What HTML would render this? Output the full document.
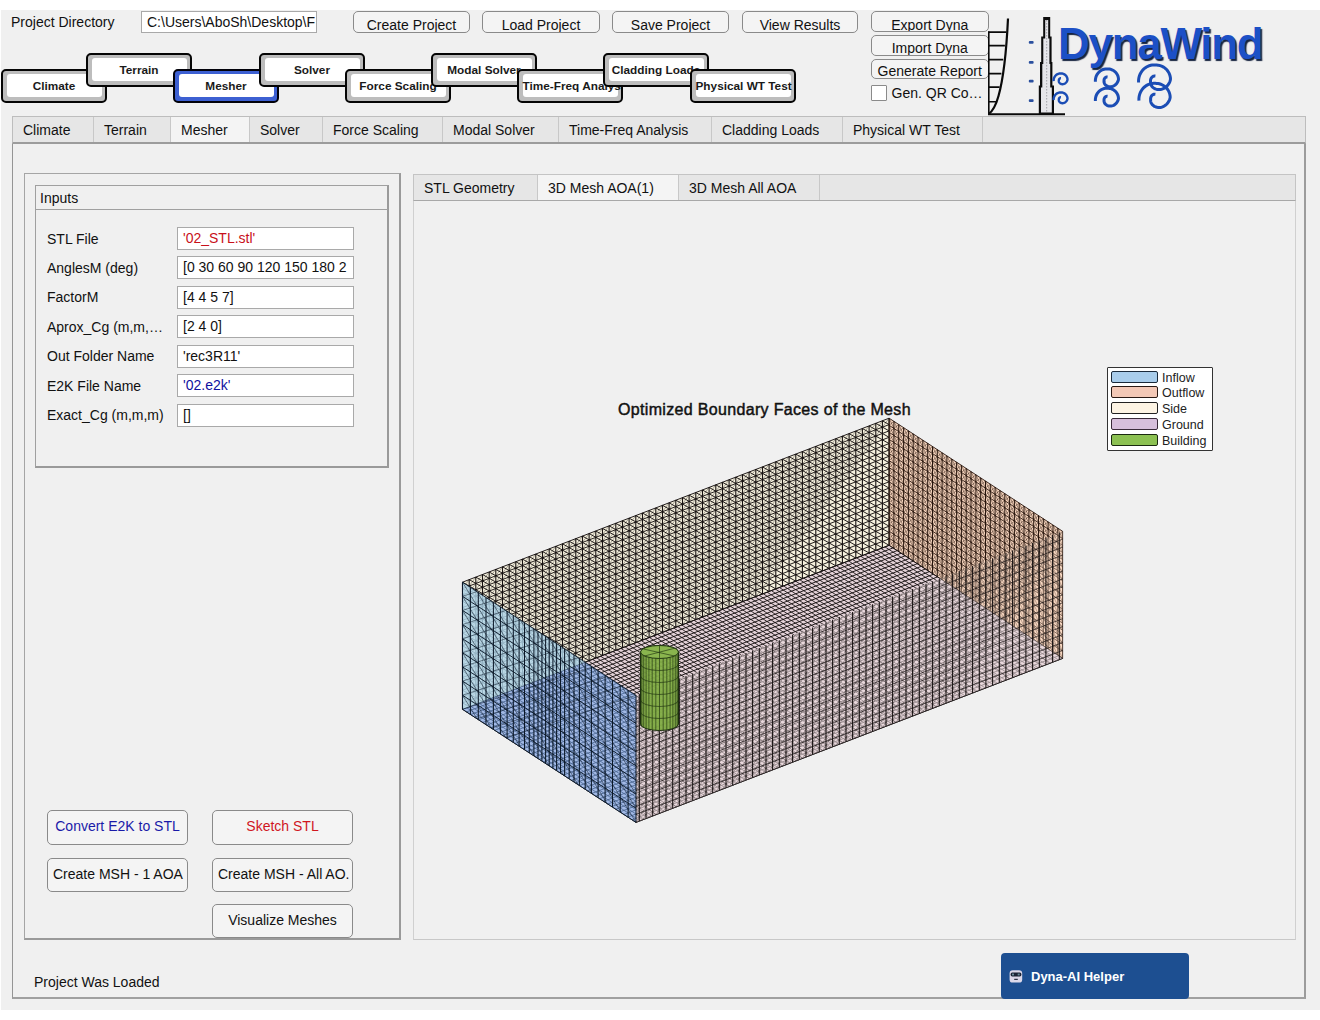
<!DOCTYPE html>
<html><head><meta charset="utf-8">
<style>
*{box-sizing:border-box;margin:0;padding:0}
html,body{width:1320px;height:1020px;overflow:hidden;background:#fff;font-family:"Liberation Sans",sans-serif;color:#111}
.a{position:absolute}
#app{position:absolute;left:1px;top:10px;width:1319px;height:1000px;background:#f0f0f0}
.t{position:absolute;white-space:nowrap;line-height:1}
.btn{position:absolute;border:1px solid #8a8a8a;border-radius:5px;background:#f4f4f4;font-size:14px;text-align:center;white-space:nowrap;overflow:hidden}
.pill{position:absolute;width:106px;height:33.5px;border:2.5px solid #050505;border-radius:5px;background:#bdbdbd;overflow:hidden}
.pill>div{position:absolute;left:3.5px;top:3px;right:3.5px;bottom:3.5px;background:#fff;border-radius:3px;font-weight:bold;font-size:11.8px;text-align:center;line-height:25px;white-space:nowrap;overflow:visible;color:#1a1a1a}
.pill.sel{border-color:#02020a;background:#3d60d2}
.ed{position:absolute;background:#fff;border:1px solid #a9a9a9;font-size:14px;white-space:nowrap;overflow:hidden;padding-left:5px;line-height:20px}
.tab{position:absolute;top:0;height:100%;border-right:1px solid #c8c8c8;font-size:14px;padding-left:10px;line-height:26px;white-space:nowrap}
.lbl{position:absolute;left:47px;font-size:14px;white-space:nowrap;line-height:1}
</style></head><body>
<div id="app"></div>

<!-- top row -->
<div class="t" style="left:11px;top:14.6px;font-size:14px">Project Directory</div>
<div class="ed" style="left:141px;top:11px;width:176px;height:22px;">C:\Users\AboSh\Desktop\F</div>

<div class="btn" style="left:353px;top:11px;width:117px;height:22px;line-height:14px;padding-top:5.5px">Create Project</div>
<div class="btn" style="left:482px;top:11px;width:118px;height:22px;line-height:14px;padding-top:5.5px">Load Project</div>
<div class="btn" style="left:612px;top:11px;width:117px;height:22px;line-height:14px;padding-top:5.5px">Save Project</div>
<div class="btn" style="left:742px;top:11px;width:116px;height:22px;line-height:14px;padding-top:5.5px">View Results</div>

<div class="btn" style="left:871px;top:11.4px;width:117.5px;height:21px;line-height:14px;padding-top:5.5px">Export Dyna</div>
<div class="btn" style="left:871px;top:35px;width:117.5px;height:21.3px;line-height:14px;padding-top:4.7px">Import Dyna</div>
<div class="btn" style="left:871px;top:58.7px;width:117.5px;height:20.7px;line-height:14px;padding-top:4.6px">Generate Report</div>
<div class="a" style="left:871.4px;top:85.3px;width:15.5px;height:15.8px;background:#fff;border:1px solid #8a8a8a;border-radius:1px"></div>
<div class="t" style="left:891.5px;top:85.5px;font-size:14px">Gen. QR Co…</div>

<!-- pills -->
<div class="pill" style="left:1px;top:69px"><div>Climate</div></div>
<div class="pill" style="left:86px;top:53px"><div>Terrain</div></div>
<div class="pill sel" style="left:173px;top:69px"><div>Mesher</div></div>
<div class="pill" style="left:259px;top:53px"><div>Solver</div></div>
<div class="pill" style="left:345px;top:69px"><div>Force Scaling</div></div>
<div class="pill" style="left:431px;top:53px"><div>Modal Solver</div></div>
<div class="pill" style="left:517px;top:69px"><div>Time-Freq Analysis</div></div>
<div class="pill" style="left:603px;top:53px"><div>Cladding Loads</div></div>
<div class="pill" style="left:690px;top:69px"><div>Physical WT Test</div></div>

<!-- LOGO -->
<svg class="a" style="left:0;top:0" width="1320" height="130" viewBox="0 0 1320 130">
<path d="M1008 18.5 C1006.5 50 1003 80 998.5 96 C996 105 993 111 988.5 114.2" stroke="#0a0a0a" stroke-width="2.2" fill="none"/>
<path d="M988 32.1L1006.4 32.1M988 45.6L1004.9 45.6M988 59.6L1003.2 59.6M988 73.6L1001.4 73.6M988 87.1L999.6 87.1M988 101.7L996.1 101.7" stroke="#0a0a0a" stroke-width="1.6" fill="none"/>
<path d="M988.8 31.5V114.5" stroke="#0a0a0a" stroke-width="1.6" fill="none"/>
<path d="M988 114.3H1065" stroke="#0a0a0a" stroke-width="2" fill="none"/>
<path d="M1043.2 17H1050.2V36.5H1051.6V62H1052.4V85.5H1054V114H1038.8V85.5H1040V62H1041.2V36.5H1043.2Z" fill="#0c0c0c"/>
<path d="M1045.2 20H1048.2V38.5H1049.4V64H1050.2V87.5H1051.8V112.5H1041V87.5H1042.3V64H1043.3V38.5H1045.2Z" fill="#e6e6ea"/>
<path d="M1046.7 20V112" stroke="#9a9aa0" stroke-width="0.9" stroke-dasharray="1.5 1.5" fill="none"/>
<rect x="1028.8" y="41.0" width="4.8" height="2.8" rx="1" fill="#2a4f9e"/>
<rect x="1028.8" y="60.9" width="4.8" height="2.8" rx="1" fill="#2a4f9e"/>
<rect x="1028.8" y="79.8" width="4.8" height="2.8" rx="1" fill="#2a4f9e"/>
<rect x="1028.8" y="99.2" width="4.8" height="2.8" rx="1" fill="#2a4f9e"/>
<path d="M1053.63 81.13 L1053.61 80.37 L1053.67 79.62 L1053.81 78.88 L1054.01 78.17 L1054.28 77.49 L1054.62 76.85 L1055.01 76.25 L1055.46 75.70 L1055.96 75.20 L1056.49 74.76 L1057.06 74.38 L1057.66 74.06 L1058.29 73.81 L1058.92 73.63 L1059.57 73.51 L1060.21 73.45 L1060.85 73.47 L1061.48 73.51 L1062.10 73.56 L1062.72 73.69 L1063.32 73.87 L1063.89 74.11 L1064.45 74.40 L1064.97 74.75 L1065.45 75.15 L1065.89 75.59 L1066.28 76.08 L1066.63 76.60 L1066.92 77.16 L1067.15 77.74 L1067.33 78.34 L1067.44 78.95 L1067.50 79.58 L1067.40 80.20 L1067.20 80.79 L1066.94 81.35 L1066.64 81.86 L1066.29 82.33 L1065.90 82.75 L1065.48 83.12 L1065.03 83.44 L1064.56 83.70 L1064.08 83.90 L1063.59 84.05 L1063.11 84.15 L1062.62 84.19 L1062.15 84.18 L1061.70 84.11 L1061.27 84.01 L1060.86 83.86 L1060.48 83.67 L1060.14 83.45 L1059.83 83.20 L1059.57 82.93 L1059.34 82.64 L1059.15 82.33 L1059.00 82.02 L1058.90 81.70 L1058.83 81.39 L1058.81 81.08 L1058.82 80.79 L1058.82 80.52 L1058.82 80.27 L1058.84 80.03 L1058.88 79.79 L1058.95 79.57 L1059.04 79.36 L1059.15 79.16 L1059.28 78.98 L1059.42 78.82 L1059.57 78.69 L1059.74 78.57 L1059.91 78.47 L1060.08 78.39 L1060.26 78.34 L1060.43 78.30 L1060.61 78.29 L1060.78 78.29 L1060.94 78.31" stroke="#1b4db5" stroke-width="2.4" fill="none" stroke-linecap="butt"/>
<path d="M1053.63 100.13 L1053.61 99.37 L1053.67 98.62 L1053.81 97.88 L1054.01 97.17 L1054.28 96.49 L1054.62 95.85 L1055.01 95.25 L1055.46 94.70 L1055.96 94.20 L1056.49 93.76 L1057.06 93.38 L1057.66 93.06 L1058.29 92.81 L1058.92 92.63 L1059.57 92.51 L1060.21 92.45 L1060.85 92.47 L1061.48 92.51 L1062.10 92.56 L1062.72 92.69 L1063.32 92.87 L1063.89 93.11 L1064.45 93.40 L1064.97 93.75 L1065.45 94.15 L1065.89 94.59 L1066.28 95.08 L1066.63 95.60 L1066.92 96.16 L1067.15 96.74 L1067.33 97.34 L1067.44 97.95 L1067.50 98.58 L1067.40 99.20 L1067.20 99.79 L1066.94 100.35 L1066.64 100.86 L1066.29 101.33 L1065.90 101.75 L1065.48 102.12 L1065.03 102.44 L1064.56 102.70 L1064.08 102.90 L1063.59 103.05 L1063.11 103.15 L1062.62 103.19 L1062.15 103.18 L1061.70 103.11 L1061.27 103.01 L1060.86 102.86 L1060.48 102.67 L1060.14 102.45 L1059.83 102.20 L1059.57 101.93 L1059.34 101.64 L1059.15 101.33 L1059.00 101.02 L1058.90 100.70 L1058.83 100.39 L1058.81 100.08 L1058.82 99.79 L1058.82 99.52 L1058.82 99.27 L1058.84 99.03 L1058.88 98.79 L1058.95 98.57 L1059.04 98.36 L1059.15 98.16 L1059.28 97.98 L1059.42 97.82 L1059.57 97.69 L1059.74 97.57 L1059.91 97.47 L1060.08 97.39 L1060.26 97.34 L1060.43 97.30 L1060.61 97.29 L1060.78 97.29 L1060.94 97.31" stroke="#1b4db5" stroke-width="2.4" fill="none" stroke-linecap="butt"/>
<path d="M1095.38 81.72 L1095.36 80.45 L1095.46 79.20 L1095.68 77.97 L1096.02 76.78 L1096.47 75.65 L1097.03 74.58 L1097.69 73.58 L1098.44 72.66 L1099.26 71.83 L1100.16 71.10 L1101.11 70.47 L1102.11 69.94 L1103.14 69.52 L1104.20 69.21 L1105.28 69.01 L1106.35 68.92 L1107.42 68.94 L1108.46 69.01 L1109.50 69.11 L1110.53 69.31 L1111.53 69.61 L1112.49 70.01 L1113.41 70.50 L1114.28 71.08 L1115.08 71.75 L1115.82 72.49 L1116.47 73.30 L1117.05 74.17 L1117.53 75.09 L1117.92 76.06 L1118.21 77.06 L1118.40 78.09 L1118.49 79.13 L1118.34 80.16 L1118.00 81.15 L1117.57 82.08 L1117.06 82.93 L1116.48 83.72 L1115.83 84.42 L1115.13 85.04 L1114.38 85.56 L1113.60 86.00 L1112.80 86.34 L1111.99 86.59 L1111.18 86.75 L1110.37 86.81 L1109.59 86.79 L1108.83 86.69 L1108.11 86.51 L1107.43 86.26 L1106.80 85.95 L1106.23 85.58 L1105.72 85.17 L1105.28 84.71 L1104.90 84.23 L1104.58 83.72 L1104.34 83.20 L1104.17 82.67 L1104.06 82.15 L1104.01 81.64 L1104.03 81.15 L1104.03 80.70 L1104.03 80.28 L1104.06 79.88 L1104.14 79.48 L1104.26 79.11 L1104.41 78.76 L1104.59 78.44 L1104.80 78.14 L1105.04 77.87 L1105.29 77.64 L1105.56 77.44 L1105.84 77.28 L1106.13 77.15 L1106.43 77.06 L1106.72 77.00 L1107.01 76.98 L1107.29 76.98 L1107.56 77.02" stroke="#1b4db5" stroke-width="3" fill="none" stroke-linecap="butt"/>
<path d="M1095.38 101.02 L1095.36 99.75 L1095.46 98.50 L1095.68 97.27 L1096.02 96.08 L1096.47 94.95 L1097.03 93.88 L1097.69 92.88 L1098.44 91.96 L1099.26 91.13 L1100.16 90.40 L1101.11 89.77 L1102.11 89.24 L1103.14 88.82 L1104.20 88.51 L1105.28 88.31 L1106.35 88.22 L1107.42 88.24 L1108.46 88.31 L1109.50 88.41 L1110.53 88.61 L1111.53 88.91 L1112.49 89.31 L1113.41 89.80 L1114.28 90.38 L1115.08 91.05 L1115.82 91.79 L1116.47 92.60 L1117.05 93.47 L1117.53 94.39 L1117.92 95.36 L1118.21 96.36 L1118.40 97.39 L1118.49 98.43 L1118.34 99.46 L1118.00 100.45 L1117.57 101.38 L1117.06 102.23 L1116.48 103.02 L1115.83 103.72 L1115.13 104.34 L1114.38 104.86 L1113.60 105.30 L1112.80 105.64 L1111.99 105.89 L1111.18 106.05 L1110.37 106.11 L1109.59 106.09 L1108.83 105.99 L1108.11 105.81 L1107.43 105.56 L1106.80 105.25 L1106.23 104.88 L1105.72 104.47 L1105.28 104.01 L1104.90 103.53 L1104.58 103.02 L1104.34 102.50 L1104.17 101.97 L1104.06 101.45 L1104.01 100.94 L1104.03 100.45 L1104.03 100.00 L1104.03 99.58 L1104.06 99.18 L1104.14 98.78 L1104.26 98.41 L1104.41 98.06 L1104.59 97.74 L1104.80 97.44 L1105.04 97.17 L1105.29 96.94 L1105.56 96.74 L1105.84 96.58 L1106.13 96.45 L1106.43 96.36 L1106.72 96.30 L1107.01 96.28 L1107.29 96.28 L1107.56 96.32" stroke="#1b4db5" stroke-width="3" fill="none" stroke-linecap="butt"/>
<path d="M1138.58 82.57 L1138.54 80.81 L1138.68 79.08 L1138.99 77.38 L1139.46 75.75 L1140.08 74.18 L1140.86 72.70 L1141.76 71.32 L1142.79 70.06 L1143.93 68.91 L1145.17 67.90 L1146.48 67.03 L1147.86 66.30 L1149.29 65.72 L1150.76 65.29 L1152.24 65.02 L1153.72 64.89 L1155.19 64.92 L1156.64 65.01 L1158.08 65.15 L1159.49 65.43 L1160.87 65.84 L1162.20 66.39 L1163.47 67.07 L1164.67 67.88 L1165.78 68.79 L1166.79 69.82 L1167.70 70.94 L1168.49 72.14 L1169.16 73.42 L1169.70 74.75 L1170.10 76.14 L1170.37 77.55 L1170.49 78.99 L1170.27 80.42 L1169.81 81.78 L1169.22 83.06 L1168.51 84.24 L1167.71 85.33 L1166.81 86.29 L1165.84 87.15 L1164.81 87.87 L1163.74 88.47 L1162.63 88.95 L1161.51 89.29 L1160.39 89.51 L1159.28 89.60 L1158.19 89.57 L1157.15 89.43 L1156.15 89.18 L1155.21 88.84 L1154.35 88.41 L1153.56 87.90 L1152.85 87.33 L1152.24 86.70 L1151.71 86.03 L1151.28 85.33 L1150.95 84.61 L1150.70 83.88 L1150.55 83.16 L1150.49 82.46 L1150.51 81.78 L1150.52 81.16 L1150.51 80.58 L1150.56 80.02 L1150.67 79.48 L1150.83 78.96 L1151.04 78.48 L1151.29 78.03 L1151.58 77.62 L1151.91 77.26 L1152.26 76.93 L1152.63 76.66 L1153.02 76.44 L1153.42 76.26 L1153.83 76.13 L1154.23 76.05 L1154.63 76.01 L1155.02 76.02 L1155.40 76.07" stroke="#1b4db5" stroke-width="3" fill="none" stroke-linecap="butt"/>
<path d="M1138.94 100.61 L1138.90 98.89 L1139.04 97.19 L1139.34 95.53 L1139.80 93.92 L1140.41 92.39 L1141.17 90.94 L1142.06 89.59 L1143.07 88.35 L1144.18 87.23 L1145.39 86.24 L1146.68 85.38 L1148.03 84.67 L1149.43 84.10 L1150.87 83.68 L1152.32 83.42 L1153.77 83.30 L1155.21 83.32 L1156.63 83.41 L1158.03 83.55 L1159.42 83.82 L1160.77 84.22 L1162.07 84.76 L1163.32 85.43 L1164.49 86.22 L1165.58 87.11 L1166.57 88.12 L1167.46 89.21 L1168.23 90.39 L1168.89 91.64 L1169.42 92.95 L1169.81 94.30 L1170.07 95.69 L1170.19 97.10 L1169.98 98.50 L1169.52 99.83 L1168.94 101.08 L1168.25 102.25 L1167.46 103.30 L1166.59 104.25 L1165.64 105.09 L1164.63 105.80 L1163.58 106.39 L1162.49 106.85 L1161.40 107.19 L1160.30 107.40 L1159.21 107.49 L1158.15 107.46 L1157.12 107.32 L1156.15 107.08 L1155.23 106.74 L1154.38 106.32 L1153.61 105.83 L1152.92 105.26 L1152.32 104.65 L1151.80 103.99 L1151.38 103.31 L1151.05 102.60 L1150.81 101.89 L1150.67 101.19 L1150.61 100.50 L1150.63 99.83 L1150.63 99.22 L1150.62 98.66 L1150.67 98.11 L1150.78 97.58 L1150.94 97.07 L1151.14 96.60 L1151.39 96.16 L1151.67 95.76 L1151.99 95.40 L1152.34 95.09 L1152.70 94.82 L1153.08 94.60 L1153.48 94.43 L1153.87 94.30 L1154.27 94.22 L1154.66 94.19 L1155.04 94.19 L1155.41 94.24" stroke="#1b4db5" stroke-width="3" fill="none" stroke-linecap="butt"/>
</svg>
<div class="t" style="left:1058px;top:22px;font-size:44px;font-weight:bold;letter-spacing:-1.3px;color:#1c50c6;text-shadow:1.5px 1.5px 1px #16233f">DynaWind</div>

<!-- main tab group -->
<div class="a" style="left:12px;top:116px;width:1294px;height:28px;background:#e6e6e6;border-top:1px solid #bdbdbd;border-left:1px solid #bdbdbd;border-right:1px solid #bdbdbd;border-bottom:2px solid #9c9c9c">
  <div class="tab" style="left:0;width:81px">Climate</div>
  <div class="tab" style="left:81px;width:77px">Terrain</div>
  <div class="tab" style="left:158px;width:79px;background:#f4f4f4">Mesher</div>
  <div class="tab" style="left:237px;width:73px">Solver</div>
  <div class="tab" style="left:310px;width:120px">Force Scaling</div>
  <div class="tab" style="left:430px;width:116px">Modal Solver</div>
  <div class="tab" style="left:546px;width:153px">Time-Freq Analysis</div>
  <div class="tab" style="left:699px;width:131px">Cladding Loads</div>
  <div class="tab" style="left:830px;width:140px">Physical WT Test</div>
</div>
<div class="a" style="left:12px;top:144px;width:1294px;height:855px;border-left:1.5px solid #959595;border-right:2px solid #9c9c9c;border-bottom:2px solid #a0a0a0"></div>

<!-- left panel -->
<div class="a" style="left:24px;top:173px;width:377px;height:767px;border:1px solid #a5a5a5;border-right:2px solid #9a9a9a;border-bottom:2px solid #9a9a9a"></div>
<div class="a" style="left:35px;top:185px;width:354px;height:283px;border:1px solid #a0a0a0;border-right:2px solid #9a9a9a;border-bottom:2px solid #9a9a9a"></div>
<div class="a" style="left:36px;top:209px;width:352px;height:1px;background:#a0a0a0"></div>
<div class="t" style="left:40px;top:191px;font-size:14px">Inputs</div>

<div class="lbl" style="top:232px">STL File</div>
<div class="lbl" style="top:261px">AnglesM (deg)</div>
<div class="lbl" style="top:290px">FactorM</div>
<div class="lbl" style="top:320px">Aprox_Cg (m,m,…</div>
<div class="lbl" style="top:349px">Out Folder Name</div>
<div class="lbl" style="top:379px">E2K File Name</div>
<div class="lbl" style="top:408px">Exact_Cg (m,m,m)</div>

<div class="ed" style="left:177px;top:227px;width:177px;height:23px;color:#c8101a">'02_STL.stl'</div>
<div class="ed" style="left:177px;top:256px;width:177px;height:23px">[0 30 60 90 120 150 180 2</div>
<div class="ed" style="left:177px;top:286px;width:177px;height:23px">[4 4 5 7]</div>
<div class="ed" style="left:177px;top:315px;width:177px;height:23px">[2 4 0]</div>
<div class="ed" style="left:177px;top:345px;width:177px;height:23px">'rec3R11'</div>
<div class="ed" style="left:177px;top:374px;width:177px;height:23px;color:#1010a0">'02.e2k'</div>
<div class="ed" style="left:177px;top:404px;width:177px;height:23px">[]</div>

<div class="btn" style="left:47px;top:810px;width:141px;height:35px;line-height:31px;color:#1a1aa8">Convert E2K to STL</div>
<div class="btn" style="left:212px;top:810px;width:141px;height:35px;line-height:31px;color:#d0161e">Sketch STL</div>
<div class="btn" style="left:47px;top:857.5px;width:141px;height:34.5px;line-height:31px;text-align:left;padding-left:5px">Create MSH - 1 AOA</div>
<div class="btn" style="left:212px;top:857.5px;width:141px;height:34.5px;line-height:31px;text-align:left;padding-left:5px">Create MSH - All AO.</div>
<div class="btn" style="left:212px;top:903.5px;width:141px;height:34.5px;line-height:31px">Visualize Meshes</div>

<!-- right tab group -->
<div class="a" style="left:413px;top:174px;width:883px;height:27px;background:#e6e6e6;border-top:1px solid #c4c4c4;border-left:1px solid #c4c4c4;border-right:1px solid #c4c4c4;border-bottom:1px solid #a8a8a8">
  <div class="tab" style="left:0;width:124px">STL Geometry</div>
  <div class="tab" style="left:124px;width:141px;background:#f4f4f4">3D Mesh AOA(1)</div>
  <div class="tab" style="left:265px;width:141px">3D Mesh All AOA</div>
</div>
<div class="a" style="left:413px;top:201px;width:883px;height:739px;border-left:1px solid #d0d0d0;border-right:1px solid #d0d0d0;border-bottom:1px solid #c8c8c8"></div>

<svg class="a" style="left:0;top:0" width="1320" height="1020" viewBox="0 0 1320 1020">
<path d="M462.5 582.2 L889.1 418.2 L889.1 545.3 L462.5 709.3Z" fill="#f6f1de"/>
<path d="M462.5 709.3 L889.1 545.3 L1062.6 658.4 L636.0 822.4Z" fill="#e4d2d8"/>
<path d="M889.1 418.2 L1062.6 531.3 L1062.6 658.4 L889.1 545.3Z" fill="#f6d4bd"/>
<path d="M462.5 582.2L462.5 709.3M469.2 579.6L469.2 706.7M475.8 577.1L475.8 704.2M482.5 574.5L482.5 701.6M489.2 572.0L489.2 699.1M495.8 569.4L495.8 696.5M502.5 566.8L502.5 693.9M509.2 564.3L509.2 691.4M515.8 561.7L515.8 688.8M522.5 559.1L522.5 686.2M529.2 556.6L529.2 683.7M535.8 554.0L535.8 681.1M542.5 551.5L542.5 678.6M549.2 548.9L549.2 676.0M555.8 546.3L555.8 673.4M562.5 543.8L562.5 670.9M569.1 541.2L569.1 668.3M575.8 538.6L575.8 665.7M582.5 536.1L582.5 663.2M589.1 533.5L589.1 660.6M595.8 531.0L595.8 658.1M602.5 528.4L602.5 655.5M609.1 525.8L609.1 652.9M615.8 523.3L615.8 650.4M622.5 520.7L622.5 647.8M629.1 518.1L629.1 645.2M635.8 515.6L635.8 642.7M642.5 513.0L642.5 640.1M649.1 510.5L649.1 637.6M655.8 507.9L655.8 635.0M662.5 505.3L662.5 632.4M669.1 502.8L669.1 629.9M675.8 500.2L675.8 627.3M682.5 497.6L682.5 624.7M689.1 495.1L689.1 622.2M695.8 492.5L695.8 619.6M702.5 490.0L702.5 617.1M709.1 487.4L709.1 614.5M715.8 484.8L715.8 611.9M722.5 482.3L722.5 609.4M729.1 479.7L729.1 606.8M735.8 477.1L735.8 604.2M742.5 474.6L742.5 601.7M749.1 472.0L749.1 599.1M755.8 469.5L755.8 596.6M762.5 466.9L762.5 594.0M769.1 464.3L769.1 591.4M775.8 461.8L775.8 588.9M782.5 459.2L782.5 586.3M789.1 456.6L789.1 583.7M795.8 454.1L795.8 581.2M802.4 451.5L802.4 578.6M809.1 449.0L809.1 576.1M815.8 446.4L815.8 573.5M822.4 443.8L822.4 570.9M829.1 441.3L829.1 568.4M835.8 438.7L835.8 565.8M842.4 436.1L842.4 563.2M849.1 433.6L849.1 560.7M855.8 431.0L855.8 558.1M862.4 428.5L862.4 555.6M869.1 425.9L869.1 553.0M875.8 423.3L875.8 550.4M882.4 420.8L882.4 547.9M889.1 418.2L889.1 545.3" stroke="#151010" stroke-width="1.1" stroke-opacity="1" fill="none"/>
<path d="M462.5 582.2L889.1 418.2M462.5 588.6L889.1 424.6M462.5 594.9L889.1 430.9M462.5 601.3L889.1 437.3M462.5 607.6L889.1 443.6M462.5 614.0L889.1 450.0M462.5 620.3L889.1 456.3M462.5 626.7L889.1 462.7M462.5 633.0L889.1 469.0M462.5 639.4L889.1 475.4M462.5 645.8L889.1 481.8M462.5 652.1L889.1 488.1M462.5 658.5L889.1 494.5M462.5 664.8L889.1 500.8M462.5 671.2L889.1 507.2M462.5 677.5L889.1 513.5M462.5 683.9L889.1 519.9M462.5 690.2L889.1 526.2M462.5 696.6L889.1 532.6M462.5 702.9L889.1 538.9M462.5 709.3L889.1 545.3" stroke="#151010" stroke-width="1.0" stroke-opacity="0.95" fill="none"/>
<path d="M462.5 702.9L469.2 706.7M462.5 696.6L475.8 704.2M462.5 690.2L482.5 701.6M462.5 683.9L489.2 699.1M462.5 677.5L495.8 696.5M462.5 671.2L502.5 693.9M462.5 664.8L509.2 691.4M462.5 658.5L515.8 688.8M462.5 652.1L522.5 686.2M462.5 645.8L529.2 683.7M462.5 639.4L535.8 681.1M462.5 633.0L542.5 678.6M462.5 626.7L549.2 676.0M462.5 620.3L555.8 673.4M462.5 614.0L562.5 670.9M462.5 607.6L569.1 668.3M462.5 601.3L575.8 665.7M462.5 594.9L582.5 663.2M462.5 588.6L589.1 660.6M462.5 582.2L595.8 658.1M469.2 579.6L602.5 655.5M475.8 577.1L609.1 652.9M482.5 574.5L615.8 650.4M489.2 572.0L622.5 647.8M495.8 569.4L629.1 645.2M502.5 566.8L635.8 642.7M509.2 564.3L642.5 640.1M515.8 561.7L649.1 637.6M522.5 559.1L655.8 635.0M529.2 556.6L662.5 632.4M535.8 554.0L669.1 629.9M542.5 551.5L675.8 627.3M549.2 548.9L682.5 624.7M555.8 546.3L689.1 622.2M562.5 543.8L695.8 619.6M569.1 541.2L702.5 617.1M575.8 538.6L709.1 614.5M582.5 536.1L715.8 611.9M589.1 533.5L722.5 609.4M595.8 531.0L729.1 606.8M602.5 528.4L735.8 604.2M609.1 525.8L742.5 601.7M615.8 523.3L749.1 599.1M622.5 520.7L755.8 596.6M629.1 518.1L762.5 594.0M635.8 515.6L769.1 591.4M642.5 513.0L775.8 588.9M649.1 510.5L782.5 586.3M655.8 507.9L789.1 583.7M662.5 505.3L795.8 581.2M669.1 502.8L802.4 578.6M675.8 500.2L809.1 576.1M682.5 497.6L815.8 573.5M689.1 495.1L822.4 570.9M695.8 492.5L829.1 568.4M702.5 490.0L835.8 565.8M709.1 487.4L842.4 563.2M715.8 484.8L849.1 560.7M722.5 482.3L855.8 558.1M729.1 479.7L862.4 555.6M735.8 477.1L869.1 553.0M742.5 474.6L875.8 550.4M749.1 472.0L882.4 547.9M755.8 469.5L889.1 545.3M762.5 466.9L889.1 538.9M769.1 464.3L889.1 532.6M775.8 461.8L889.1 526.2M782.5 459.2L889.1 519.9M789.1 456.6L889.1 513.5M795.8 454.1L889.1 507.2M802.4 451.5L889.1 500.8M809.1 449.0L889.1 494.5M815.8 446.4L889.1 488.1M822.4 443.8L889.1 481.8M829.1 441.3L889.1 475.4M835.8 438.7L889.1 469.0M842.4 436.1L889.1 462.7M849.1 433.6L889.1 456.3M855.8 431.0L889.1 450.0M862.4 428.5L889.1 443.6M869.1 425.9L889.1 437.3M875.8 423.3L889.1 430.9M882.4 420.8L889.1 424.6" stroke="#151010" stroke-width="1.0" stroke-opacity="0.95" fill="none"/>
<path d="M469.2 579.6L462.5 588.6M475.8 577.1L462.5 594.9M482.5 574.5L462.5 601.3M489.2 572.0L462.5 607.6M495.8 569.4L462.5 614.0M502.5 566.8L462.5 620.3M509.2 564.3L462.5 626.7M515.8 561.7L462.5 633.0M522.5 559.1L462.5 639.4M529.2 556.6L462.5 645.8M535.8 554.0L462.5 652.1M542.5 551.5L462.5 658.5M549.2 548.9L462.5 664.8M555.8 546.3L462.5 671.2M562.5 543.8L462.5 677.5M569.1 541.2L462.5 683.9M575.8 538.6L462.5 690.2M582.5 536.1L462.5 696.6M589.1 533.5L462.5 702.9M595.8 531.0L462.5 709.3M602.5 528.4L469.2 706.7M609.1 525.8L475.8 704.2M615.8 523.3L482.5 701.6M622.5 520.7L489.2 699.1M629.1 518.1L495.8 696.5M635.8 515.6L502.5 693.9M642.5 513.0L509.2 691.4M649.1 510.5L515.8 688.8M655.8 507.9L522.5 686.2M662.5 505.3L529.2 683.7M669.1 502.8L535.8 681.1M675.8 500.2L542.5 678.6M682.5 497.6L549.2 676.0M689.1 495.1L555.8 673.4M695.8 492.5L562.5 670.9M702.5 490.0L569.1 668.3M709.1 487.4L575.8 665.7M715.8 484.8L582.5 663.2M722.5 482.3L589.1 660.6M729.1 479.7L595.8 658.1M735.8 477.1L602.5 655.5M742.5 474.6L609.1 652.9M749.1 472.0L615.8 650.4M755.8 469.5L622.5 647.8M762.5 466.9L629.1 645.2M769.1 464.3L635.8 642.7M775.8 461.8L642.5 640.1M782.5 459.2L649.1 637.6M789.1 456.6L655.8 635.0M795.8 454.1L662.5 632.4M802.4 451.5L669.1 629.9M809.1 449.0L675.8 627.3M815.8 446.4L682.5 624.7M822.4 443.8L689.1 622.2M829.1 441.3L695.8 619.6M835.8 438.7L702.5 617.1M842.4 436.1L709.1 614.5M849.1 433.6L715.8 611.9M855.8 431.0L722.5 609.4M862.4 428.5L729.1 606.8M869.1 425.9L735.8 604.2M875.8 423.3L742.5 601.7M882.4 420.8L749.1 599.1M889.1 418.2L755.8 596.6" stroke="#151010" stroke-width="0.7" stroke-opacity="0.5" fill="none"/>
<path d="M889.1 418.2L889.1 545.3M893.9 421.3L893.9 548.4M898.7 424.5L898.7 551.6M903.6 427.6L903.6 554.7M908.4 430.8L908.4 557.9M913.2 433.9L913.2 561.0M918.0 437.1L918.0 564.2M922.8 440.2L922.8 567.3M927.7 443.3L927.7 570.4M932.5 446.5L932.5 573.6M937.3 449.6L937.3 576.7M942.1 452.8L942.1 579.9M946.9 455.9L946.9 583.0M951.8 459.0L951.8 586.1M956.6 462.2L956.6 589.3M961.4 465.3L961.4 592.4M966.2 468.5L966.2 595.6M971.0 471.6L971.0 598.7M975.9 474.8L975.9 601.9M980.7 477.9L980.7 605.0M985.5 481.0L985.5 608.1M990.3 484.2L990.3 611.3M995.1 487.3L995.1 614.4M999.9 490.5L999.9 617.6M1004.8 493.6L1004.8 620.7M1009.6 496.7L1009.6 623.8M1014.4 499.9L1014.4 627.0M1019.2 503.0L1019.2 630.1M1024.0 506.2L1024.0 633.3M1028.9 509.3L1028.9 636.4M1033.7 512.5L1033.7 639.6M1038.5 515.6L1038.5 642.7M1043.3 518.7L1043.3 645.8M1048.1 521.9L1048.1 649.0M1053.0 525.0L1053.0 652.1M1057.8 528.2L1057.8 655.3M1062.6 531.3L1062.6 658.4" stroke="#26140c" stroke-width="1.0" stroke-opacity="1" fill="none"/>
<path d="M889.1 418.2L1062.6 531.3M889.1 425.3L1062.6 538.4M889.1 432.3L1062.6 545.4M889.1 439.4L1062.6 552.5M889.1 446.4L1062.6 559.5M889.1 453.5L1062.6 566.6M889.1 460.6L1062.6 573.7M889.1 467.6L1062.6 580.7M889.1 474.7L1062.6 587.8M889.1 481.8L1062.6 594.9M889.1 488.8L1062.6 601.9M889.1 495.9L1062.6 609.0M889.1 502.9L1062.6 616.0M889.1 510.0L1062.6 623.1M889.1 517.1L1062.6 630.2M889.1 524.1L1062.6 637.2M889.1 531.2L1062.6 644.3M889.1 538.2L1062.6 651.3M889.1 545.3L1062.6 658.4" stroke="#26140c" stroke-width="0.9" stroke-opacity="1" fill="none"/>
<path d="M889.1 538.2L893.9 548.4M889.1 531.2L898.7 551.6M889.1 524.1L903.6 554.7M889.1 517.1L908.4 557.9M889.1 510.0L913.2 561.0M889.1 502.9L918.0 564.2M889.1 495.9L922.8 567.3M889.1 488.8L927.7 570.4M889.1 481.8L932.5 573.6M889.1 474.7L937.3 576.7M889.1 467.6L942.1 579.9M889.1 460.6L946.9 583.0M889.1 453.5L951.8 586.1M889.1 446.4L956.6 589.3M889.1 439.4L961.4 592.4M889.1 432.3L966.2 595.6M889.1 425.3L971.0 598.7M889.1 418.2L975.9 601.9M893.9 421.3L980.7 605.0M898.7 424.5L985.5 608.1M903.6 427.6L990.3 611.3M908.4 430.8L995.1 614.4M913.2 433.9L999.9 617.6M918.0 437.1L1004.8 620.7M922.8 440.2L1009.6 623.8M927.7 443.3L1014.4 627.0M932.5 446.5L1019.2 630.1M937.3 449.6L1024.0 633.3M942.1 452.8L1028.9 636.4M946.9 455.9L1033.7 639.6M951.8 459.0L1038.5 642.7M956.6 462.2L1043.3 645.8M961.4 465.3L1048.1 649.0M966.2 468.5L1053.0 652.1M971.0 471.6L1057.8 655.3M975.9 474.8L1062.6 658.4M980.7 477.9L1062.6 651.3M985.5 481.0L1062.6 644.3M990.3 484.2L1062.6 637.2M995.1 487.3L1062.6 630.2M999.9 490.5L1062.6 623.1M1004.8 493.6L1062.6 616.0M1009.6 496.7L1062.6 609.0M1014.4 499.9L1062.6 601.9M1019.2 503.0L1062.6 594.9M1024.0 506.2L1062.6 587.8M1028.9 509.3L1062.6 580.7M1033.7 512.5L1062.6 573.7M1038.5 515.6L1062.6 566.6M1043.3 518.7L1062.6 559.5M1048.1 521.9L1062.6 552.5M1053.0 525.0L1062.6 545.4M1057.8 528.2L1062.6 538.4M893.9 421.3L889.1 425.3M898.7 424.5L889.1 432.3M903.6 427.6L889.1 439.4M908.4 430.8L889.1 446.4M913.2 433.9L889.1 453.5M918.0 437.1L889.1 460.6M922.8 440.2L889.1 467.6M927.7 443.3L889.1 474.7M932.5 446.5L889.1 481.8M937.3 449.6L889.1 488.8M942.1 452.8L889.1 495.9M946.9 455.9L889.1 502.9M951.8 459.0L889.1 510.0M956.6 462.2L889.1 517.1M961.4 465.3L889.1 524.1M966.2 468.5L889.1 531.2M971.0 471.6L889.1 538.2M975.9 474.8L889.1 545.3M980.7 477.9L893.9 548.4M985.5 481.0L898.7 551.6M990.3 484.2L903.6 554.7M995.1 487.3L908.4 557.9M999.9 490.5L913.2 561.0M1004.8 493.6L918.0 564.2M1009.6 496.7L922.8 567.3M1014.4 499.9L927.7 570.4M1019.2 503.0L932.5 573.6M1024.0 506.2L937.3 576.7M1028.9 509.3L942.1 579.9M1033.7 512.5L946.9 583.0M1038.5 515.6L951.8 586.1M1043.3 518.7L956.6 589.3M1048.1 521.9L961.4 592.4M1053.0 525.0L966.2 595.6M1057.8 528.2L971.0 598.7M1062.6 531.3L975.9 601.9" stroke="#26140c" stroke-width="0.75" stroke-opacity="0.6" fill="none"/>
<path d="M462.5 709.3L889.1 545.3M466.5 711.9L893.1 547.9M470.6 714.6L897.2 550.6M474.6 717.2L901.2 553.2M478.6 719.8L905.2 555.8M482.7 722.5L909.3 558.5M486.7 725.1L913.3 561.1M490.7 727.7L917.3 563.7M494.8 730.3L921.4 566.3M498.8 733.0L925.4 569.0M502.8 735.6L929.4 571.6M506.9 738.2L933.5 574.2M510.9 740.9L937.5 576.9M515.0 743.5L941.6 579.5M519.0 746.1L945.6 582.1M523.0 748.8L949.6 584.8M527.1 751.4L953.7 587.4M531.1 754.0L957.7 590.0M535.1 756.6L961.7 592.6M539.2 759.3L965.8 595.3M543.2 761.9L969.8 597.9M547.2 764.5L973.8 600.5M551.3 767.2L977.9 603.2M555.3 769.8L981.9 605.8M559.3 772.4L985.9 608.4M563.4 775.1L990.0 611.1M567.4 777.7L994.0 613.7M571.4 780.3L998.0 616.3M575.5 782.9L1002.1 618.9M579.5 785.6L1006.1 621.6M583.5 788.2L1010.1 624.2M587.6 790.8L1014.2 626.8M591.6 793.5L1018.2 629.5M595.7 796.1L1022.3 632.1M599.7 798.7L1026.3 634.7M603.7 801.4L1030.3 637.4M607.8 804.0L1034.4 640.0M611.8 806.6L1038.4 642.6M615.8 809.2L1042.4 645.2M619.9 811.9L1046.5 647.9M623.9 814.5L1050.5 650.5M627.9 817.1L1054.5 653.1M632.0 819.8L1058.6 655.8M636.0 822.4L1062.6 658.4" stroke="#151010" stroke-width="1.0" stroke-opacity="0.95" fill="none"/>
<path d="M462.5 709.3L636.0 822.4M466.6 707.7L640.1 820.8M470.6 706.2L644.1 819.3M474.7 704.6L648.2 817.7M478.8 703.1L652.3 816.2M482.8 701.5L656.3 814.6M486.9 699.9L660.4 813.0M490.9 698.4L664.4 811.5M495.0 696.8L668.5 809.9M499.1 695.2L672.6 808.3M503.1 693.7L676.6 806.8M507.2 692.1L680.7 805.2M511.3 690.6L684.8 803.7M515.3 689.0L688.8 802.1M519.4 687.4L692.9 800.5M523.4 685.9L696.9 799.0M527.5 684.3L701.0 797.4M531.6 682.7L705.1 795.8M535.6 681.2L709.1 794.3M539.7 679.6L713.2 792.7M543.8 678.1L717.3 791.2M547.8 676.5L721.3 789.6M551.9 674.9L725.4 788.0M555.9 673.4L729.4 786.5M560.0 671.8L733.5 784.9M564.1 670.3L737.6 783.4M568.1 668.7L741.6 781.8M572.2 667.1L745.7 780.2M576.3 665.6L749.8 778.7M580.3 664.0L753.8 777.1M584.4 662.4L757.9 775.5M588.4 660.9L761.9 774.0M592.5 659.3L766.0 772.4M596.6 657.8L770.1 770.9M600.6 656.2L774.1 769.3M604.7 654.6L778.2 767.7M608.8 653.1L782.3 766.2M612.8 651.5L786.3 764.6M616.9 649.9L790.4 763.0M621.0 648.4L794.5 761.5M625.0 646.8L798.5 759.9M629.1 645.3L802.6 758.4M633.1 643.7L806.6 756.8M637.2 642.1L810.7 755.2M641.3 640.6L814.8 753.7M645.3 639.0L818.8 752.1M649.4 637.5L822.9 750.6M653.5 635.9L827.0 749.0M657.5 634.3L831.0 747.4M661.6 632.8L835.1 745.9M665.6 631.2L839.1 744.3M669.7 629.6L843.2 742.7M673.8 628.1L847.3 741.2M677.8 626.5L851.3 739.6M681.9 625.0L855.4 738.1M686.0 623.4L859.5 736.5M690.0 621.8L863.5 734.9M694.1 620.3L867.6 733.4M698.1 618.7L871.6 731.8M702.2 617.1L875.7 730.2M706.3 615.6L879.8 728.7M710.3 614.0L883.8 727.1M714.4 612.5L887.9 725.6M718.5 610.9L892.0 724.0M722.5 609.3L896.0 722.4M726.6 607.8L900.1 720.9M730.6 606.2L904.1 719.3M734.7 604.7L908.2 717.8M738.8 603.1L912.3 716.2M742.8 601.5L916.3 714.6M746.9 600.0L920.4 713.1M751.0 598.4L924.5 711.5M755.0 596.8L928.5 709.9M759.1 595.3L932.6 708.4M763.2 593.7L936.7 706.8M767.2 592.2L940.7 705.3M771.3 590.6L944.8 703.7M775.3 589.0L948.8 702.1M779.4 587.5L952.9 700.6M783.5 585.9L957.0 699.0M787.5 584.3L961.0 697.4M791.6 582.8L965.1 695.9M795.7 581.2L969.2 694.3M799.7 579.7L973.2 692.8M803.8 578.1L977.3 691.2M807.8 576.5L981.3 689.6M811.9 575.0L985.4 688.1M816.0 573.4L989.5 686.5M820.0 571.9L993.5 685.0M824.1 570.3L997.6 683.4M828.2 568.7L1001.7 681.8M832.2 567.2L1005.7 680.3M836.3 565.6L1009.8 678.7M840.3 564.0L1013.8 677.1M844.4 562.5L1017.9 675.6M848.5 560.9L1022.0 674.0M852.5 559.4L1026.0 672.5M856.6 557.8L1030.1 670.9M860.7 556.2L1034.2 669.3M864.7 554.7L1038.2 667.8M868.8 553.1L1042.3 666.2M872.8 551.5L1046.3 664.6M876.9 550.0L1050.4 663.1M881.0 548.4L1054.5 661.5M885.0 546.9L1058.5 660.0M889.1 545.3L1062.6 658.4" stroke="#151010" stroke-width="0.95" stroke-opacity="0.9" fill="none"/>
<path d="M462.5 582.2 L585.1 662.2 L462.5 709.3Z" fill="#b0d6ea" fill-opacity="0.82"/>
<path d="M585.1 662.2 L636.0 695.3 L636.0 822.4 L462.5 709.3Z" fill="#77a9ee" fill-opacity="0.6"/>
<path d="M636.0 695.3 L940.0 578.4 L1062.6 658.4 L636.0 822.4Z" fill="#ebdcdf" fill-opacity="0.62"/>
<path d="M940.0 578.4 L1062.6 531.3 L1062.6 658.4Z" fill="#f8dcc8" fill-opacity="0.35"/>
<path d="M462.5 582.2L462.5 709.3M470.4 587.4L470.4 714.5M478.3 592.5L478.3 719.6M486.0 597.5L486.0 724.6M493.4 602.3L493.4 729.4M500.4 606.9L500.4 734.0M507.1 611.3L507.1 738.4M513.3 615.3L513.3 742.4M519.1 619.1L519.1 746.2M524.5 622.6L524.5 749.7M529.3 625.8L529.3 752.9M533.9 628.7L533.9 755.8M538.0 631.4L538.0 758.5M541.9 634.0L541.9 761.1M545.6 636.4L545.6 763.5M549.2 638.8L549.2 765.9M552.9 641.1L552.9 768.2M556.6 643.5L556.6 770.6M560.5 646.1L560.5 773.2M564.6 648.8L564.6 775.9M569.2 651.7L569.2 778.8M574.0 654.9L574.0 782.0M579.4 658.4L579.4 785.5M585.2 662.2L585.2 789.3M591.4 666.2L591.4 793.3M598.1 670.6L598.1 797.7M605.1 675.2L605.1 802.3M612.5 680.0L612.5 807.1M620.2 685.0L620.2 812.1M628.1 690.1L628.1 817.2M636.0 695.3L636.0 822.4" stroke="#0b1828" stroke-width="1.05" stroke-opacity="1" fill="none"/>
<path d="M462.5 582.2L636.0 695.3M462.5 596.3L636.0 709.4M462.5 610.4L636.0 723.5M462.5 624.6L636.0 737.7M462.5 638.7L636.0 751.8M462.5 652.8L636.0 765.9M462.5 666.9L636.0 780.0M462.5 681.1L636.0 794.2M462.5 695.2L636.0 808.3M462.5 709.3L636.0 822.4" stroke="#0b1828" stroke-width="0.95" stroke-opacity="1" fill="none"/>
<path d="M462.5 695.2L477.0 718.7M462.5 681.1L491.4 728.2M462.5 666.9L505.9 737.6M462.5 652.8L520.3 747.0M462.5 638.7L534.8 756.4M462.5 624.6L549.2 765.9M462.5 610.4L563.7 775.3M462.5 596.3L578.2 784.7M462.5 582.2L592.6 794.1M477.0 591.6L607.1 803.6M491.4 601.1L621.5 813.0M505.9 610.5L636.0 822.4M520.3 619.9L636.0 808.3M534.8 629.3L636.0 794.2M549.2 638.8L636.0 780.0M563.7 648.2L636.0 765.9M578.2 657.6L636.0 751.8M592.6 667.0L636.0 737.7M607.1 676.5L636.0 723.5M621.5 685.9L636.0 709.4M477.0 591.6L462.5 596.3M491.4 601.1L462.5 610.4M505.9 610.5L462.5 624.6M520.3 619.9L462.5 638.7M534.8 629.3L462.5 652.8M549.2 638.8L462.5 666.9M563.7 648.2L462.5 681.1M578.2 657.6L462.5 695.2M592.6 667.0L462.5 709.3M607.1 676.5L477.0 718.7M621.5 685.9L491.4 728.2M636.0 695.3L505.9 737.6" stroke="#0b1828" stroke-width="0.75" stroke-opacity="0.7" fill="none"/>
<path d="M639.3 694.0L639.3 821.1M646.0 691.5L646.0 818.6M652.7 688.9L652.7 816.0M659.3 686.3L659.3 813.4M666.0 683.8L666.0 810.9M672.7 681.2L672.7 808.3M679.3 678.6L679.3 805.7M686.0 676.1L686.0 803.2M692.7 673.5L692.7 800.6M699.3 671.0L699.3 798.1M706.0 668.4L706.0 795.5M712.7 665.8L712.7 792.9M719.3 663.3L719.3 790.4M726.0 660.7L726.0 787.8M732.7 658.1L732.7 785.2M739.3 655.6L739.3 782.7M746.0 653.0L746.0 780.1M752.6 650.5L752.6 777.6M759.3 647.9L759.3 775.0M766.0 645.3L766.0 772.4M772.6 642.8L772.6 769.9M779.3 640.2L779.3 767.3M786.0 637.6L786.0 764.7M792.6 635.1L792.6 762.2M799.3 632.5L799.3 759.6M806.0 630.0L806.0 757.1M812.6 627.4L812.6 754.5M819.3 624.8L819.3 751.9M826.0 622.3L826.0 749.4M832.6 619.7L832.6 746.8M839.3 617.1L839.3 744.2M846.0 614.6L846.0 741.7M852.6 612.0L852.6 739.1M859.3 609.5L859.3 736.6M866.0 606.9L866.0 734.0M872.6 604.3L872.6 731.4M879.3 601.8L879.3 728.9M886.0 599.2L886.0 726.3M892.6 596.6L892.6 723.7M899.3 594.1L899.3 721.2M906.0 591.5L906.0 718.6M912.6 589.0L912.6 716.1M919.3 586.4L919.3 713.5M926.0 583.8L926.0 710.9M932.6 581.3L932.6 708.4M939.3 578.7L939.3 705.8M946.0 576.1L946.0 703.2M952.6 573.6L952.6 700.7M959.3 571.0L959.3 698.1M965.9 568.5L965.9 695.6M972.6 565.9L972.6 693.0M979.3 563.3L979.3 690.4M985.9 560.8L985.9 687.9M992.6 558.2L992.6 685.3M999.3 555.6L999.3 682.7M1005.9 553.1L1005.9 680.2M1012.6 550.5L1012.6 677.6M1019.3 548.0L1019.3 675.1M1025.9 545.4L1025.9 672.5M1032.6 542.8L1032.6 669.9M1039.3 540.3L1039.3 667.4M1045.9 537.7L1045.9 664.8M1052.6 535.1L1052.6 662.2M1059.3 532.6L1059.3 659.7" stroke="#151010" stroke-width="1.05" stroke-opacity="1" fill="none"/>
<path d="M636.0 703.2L1062.6 539.2M636.0 711.2L1062.6 547.2M636.0 719.1L1062.6 555.1M636.0 727.1L1062.6 563.1M636.0 735.0L1062.6 571.0M636.0 743.0L1062.6 579.0M636.0 750.9L1062.6 586.9M636.0 758.9L1062.6 594.9M636.0 766.8L1062.6 602.8M636.0 774.7L1062.6 610.7M636.0 782.7L1062.6 618.7M636.0 790.6L1062.6 626.6M636.0 798.6L1062.6 634.6M636.0 806.5L1062.6 642.5M636.0 814.5L1062.6 650.5M636.0 822.4L1062.6 658.4" stroke="#151010" stroke-width="0.85" stroke-opacity="0.8" fill="none"/>
<path d="M636.0 814.5L642.7 819.8M636.0 806.5L649.3 817.3M636.0 798.6L656.0 814.7M636.0 790.6L662.7 812.2M636.0 782.7L669.3 809.6M636.0 774.7L676.0 807.0M636.0 766.8L682.7 804.5M636.0 758.9L689.3 801.9M636.0 750.9L696.0 799.3M636.0 743.0L702.7 796.8M636.0 735.0L709.3 794.2M636.0 727.1L716.0 791.7M636.0 719.1L722.7 789.1M636.0 711.2L729.3 786.5M636.0 703.2L736.0 784.0M636.0 695.3L742.6 781.4M642.7 692.7L749.3 778.8M649.3 690.2L756.0 776.3M656.0 687.6L762.6 773.7M662.7 685.1L769.3 771.2M669.3 682.5L776.0 768.6M676.0 679.9L782.6 766.0M682.7 677.4L789.3 763.5M689.3 674.8L796.0 760.9M696.0 672.2L802.6 758.3M702.7 669.7L809.3 755.8M709.3 667.1L816.0 753.2M716.0 664.6L822.6 750.7M722.7 662.0L829.3 748.1M729.3 659.4L836.0 745.5M736.0 656.9L842.6 743.0M742.6 654.3L849.3 740.4M749.3 651.7L856.0 737.8M756.0 649.2L862.6 735.3M762.6 646.6L869.3 732.7M769.3 644.1L876.0 730.2M776.0 641.5L882.6 727.6M782.6 638.9L889.3 725.0M789.3 636.4L896.0 722.5M796.0 633.8L902.6 719.9M802.6 631.2L909.3 717.3M809.3 628.7L916.0 714.8M816.0 626.1L922.6 712.2M822.6 623.6L929.3 709.7M829.3 621.0L936.0 707.1M836.0 618.4L942.6 704.5M842.6 615.9L949.3 702.0M849.3 613.3L956.0 699.4M856.0 610.7L962.6 696.8M862.6 608.2L969.3 694.3M869.3 605.6L975.9 691.7M876.0 603.1L982.6 689.2M882.6 600.5L989.3 686.6M889.3 597.9L995.9 684.0M896.0 595.4L1002.6 681.5M902.6 592.8L1009.3 678.9M909.3 590.2L1015.9 676.3M916.0 587.7L1022.6 673.8M922.6 585.1L1029.3 671.2M929.3 582.6L1035.9 668.7M936.0 580.0L1042.6 666.1M942.6 577.4L1049.3 663.5M949.3 574.9L1055.9 661.0M956.0 572.3L1062.6 658.4M962.6 569.7L1062.6 650.5M969.3 567.2L1062.6 642.5M975.9 564.6L1062.6 634.6M982.6 562.1L1062.6 626.6M989.3 559.5L1062.6 618.7M995.9 556.9L1062.6 610.7M1002.6 554.4L1062.6 602.8M1009.3 551.8L1062.6 594.9M1015.9 549.2L1062.6 586.9M1022.6 546.7L1062.6 579.0M1029.3 544.1L1062.6 571.0M1035.9 541.6L1062.6 563.1M1042.6 539.0L1062.6 555.1M1049.3 536.4L1062.6 547.2M1055.9 533.9L1062.6 539.2M642.7 692.7L636.0 703.2M649.3 690.2L636.0 711.2M656.0 687.6L636.0 719.1M662.7 685.1L636.0 727.1M669.3 682.5L636.0 735.0M676.0 679.9L636.0 743.0M682.7 677.4L636.0 750.9M689.3 674.8L636.0 758.9M696.0 672.2L636.0 766.8M702.7 669.7L636.0 774.7M709.3 667.1L636.0 782.7M716.0 664.6L636.0 790.6M722.7 662.0L636.0 798.6M729.3 659.4L636.0 806.5M736.0 656.9L636.0 814.5M742.6 654.3L636.0 822.4M749.3 651.7L642.7 819.8M756.0 649.2L649.3 817.3M762.6 646.6L656.0 814.7M769.3 644.1L662.7 812.2M776.0 641.5L669.3 809.6M782.6 638.9L676.0 807.0M789.3 636.4L682.7 804.5M796.0 633.8L689.3 801.9M802.6 631.2L696.0 799.3M809.3 628.7L702.7 796.8M816.0 626.1L709.3 794.2M822.6 623.6L716.0 791.7M829.3 621.0L722.7 789.1M836.0 618.4L729.3 786.5M842.6 615.9L736.0 784.0M849.3 613.3L742.6 781.4M856.0 610.7L749.3 778.8M862.6 608.2L756.0 776.3M869.3 605.6L762.6 773.7M876.0 603.1L769.3 771.2M882.6 600.5L776.0 768.6M889.3 597.9L782.6 766.0M896.0 595.4L789.3 763.5M902.6 592.8L796.0 760.9M909.3 590.2L802.6 758.3M916.0 587.7L809.3 755.8M922.6 585.1L816.0 753.2M929.3 582.6L822.6 750.7M936.0 580.0L829.3 748.1M942.6 577.4L836.0 745.5M949.3 574.9L842.6 743.0M956.0 572.3L849.3 740.4M962.6 569.7L856.0 737.8M969.3 567.2L862.6 735.3M975.9 564.6L869.3 732.7M982.6 562.1L876.0 730.2M989.3 559.5L882.6 727.6M995.9 556.9L889.3 725.0M1002.6 554.4L896.0 722.5M1009.3 551.8L902.6 719.9M1015.9 549.2L909.3 717.3M1022.6 546.7L916.0 714.8M1029.3 544.1L922.6 712.2M1035.9 541.6L929.3 709.7M1042.6 539.0L936.0 707.1M1049.3 536.4L942.6 704.5M1055.9 533.9L949.3 702.0M1062.6 531.3L956.0 699.4" stroke="#151010" stroke-width="0.7" stroke-opacity="0.45" fill="none"/>
<path d="M640.5 652.0 A19.0 6.5 0 0 1 678.5 652.0 L678.5 724.0 A19.0 6.5 0 0 1 640.5 724.0 Z" fill="#82ad45" fill-opacity="0.95" stroke="#1c300e" stroke-width="1"/>
<ellipse cx="659.5" cy="652.0" rx="19.0" ry="6.5" fill="#8ab54e" stroke="#1c300e" stroke-width="0.9"/>
<path d="M640.9 653.3L640.9 725.3M641.9 654.5L641.9 726.5M643.7 655.6L643.7 727.6M646.1 656.6L646.1 728.6M648.9 657.4L648.9 729.4M652.2 658.0L652.2 730.0M655.8 658.4L655.8 730.4M659.5 658.5L659.5 730.5M663.2 658.4L663.2 730.4M666.8 658.0L666.8 730.0M670.1 657.4L670.1 729.4M672.9 656.6L672.9 728.6M675.3 655.6L675.3 727.6M677.1 654.5L677.1 726.5M678.1 653.3L678.1 725.3M640.5 664.0 A19.0 6.5 0 0 0 678.5 664.0M640.5 676.0 A19.0 6.5 0 0 0 678.5 676.0M640.5 688.0 A19.0 6.5 0 0 0 678.5 688.0M640.5 700.0 A19.0 6.5 0 0 0 678.5 700.0M640.5 712.0 A19.0 6.5 0 0 0 678.5 712.0M643.5 649.0L674.5 656.0M644.5 656.0L675.5 648.0M659.5 645.5L659.5 658.5" stroke="#1c300e" stroke-width="0.75" stroke-opacity="0.85" fill="none"/>
</svg>

<!-- legend -->
<div class="a" style="left:1107px;top:367px;width:106px;height:84px;background:#fff;border:1px solid #333;border-radius:1px"></div>
<div class="a" style="left:1111px;top:371px;width:47px;height:12px;background:#a9cdeb;border:1px solid #1a2a3a;border-radius:2px"></div>
<div class="a" style="left:1111px;top:386px;width:47px;height:12px;background:#f3c8b6;border:1px solid #2a1a14;border-radius:2px"></div>
<div class="a" style="left:1111px;top:402px;width:47px;height:12px;background:#fdf4e4;border:1px solid #222;border-radius:2px"></div>
<div class="a" style="left:1111px;top:418px;width:47px;height:12px;background:#d7bfdc;border:1px solid #3a2a3a;border-radius:2px"></div>
<div class="a" style="left:1111px;top:434px;width:47px;height:12px;background:#8cc152;border:1px solid #1a2a10;border-radius:2px"></div>
<div class="t" style="left:1162px;top:371.5px;font-size:12.5px;color:#222">Inflow</div>
<div class="t" style="left:1162px;top:387px;font-size:12.5px;color:#222">Outflow</div>
<div class="t" style="left:1162px;top:402.5px;font-size:12.5px;color:#222">Side</div>
<div class="t" style="left:1162px;top:418.5px;font-size:12.5px;color:#222">Ground</div>
<div class="t" style="left:1162px;top:434.5px;font-size:12.5px;color:#222">Building</div>

<div class="t" style="left:618px;top:401.8px;font-size:16px;letter-spacing:0.33px;-webkit-text-stroke:0.45px #111;color:#111">Optimized Boundary Faces of the Mesh</div>

<!-- status -->
<div class="t" style="left:34px;top:975px;font-size:14px">Project Was Loaded</div>

<!-- AI helper -->
<div class="a" style="left:1001px;top:953px;width:188px;height:46px;background:#1d4f91;border-radius:4px"></div>
<div class="t" style="left:1031px;top:970px;font-size:13px;font-weight:bold;color:#fff">Dyna-AI Helper</div>
<svg class="a" style="left:1005px;top:965px" width="24" height="24" viewBox="0 0 24 24">
<rect x="4.6" y="5.2" width="12.6" height="12.4" rx="3.2" fill="#dcd9ea"/>
<rect x="5.6" y="7.6" width="10.8" height="3.8" rx="1.6" fill="#1b2436"/>
<rect x="7" y="8.6" width="2" height="1.8" fill="#6c8f9c"/>
<rect x="12.7" y="8.6" width="2" height="1.8" fill="#6c8f9c"/>
<rect x="9.2" y="13.8" width="3.6" height="1.1" fill="#1b2436"/>
</svg>


</body></html>
